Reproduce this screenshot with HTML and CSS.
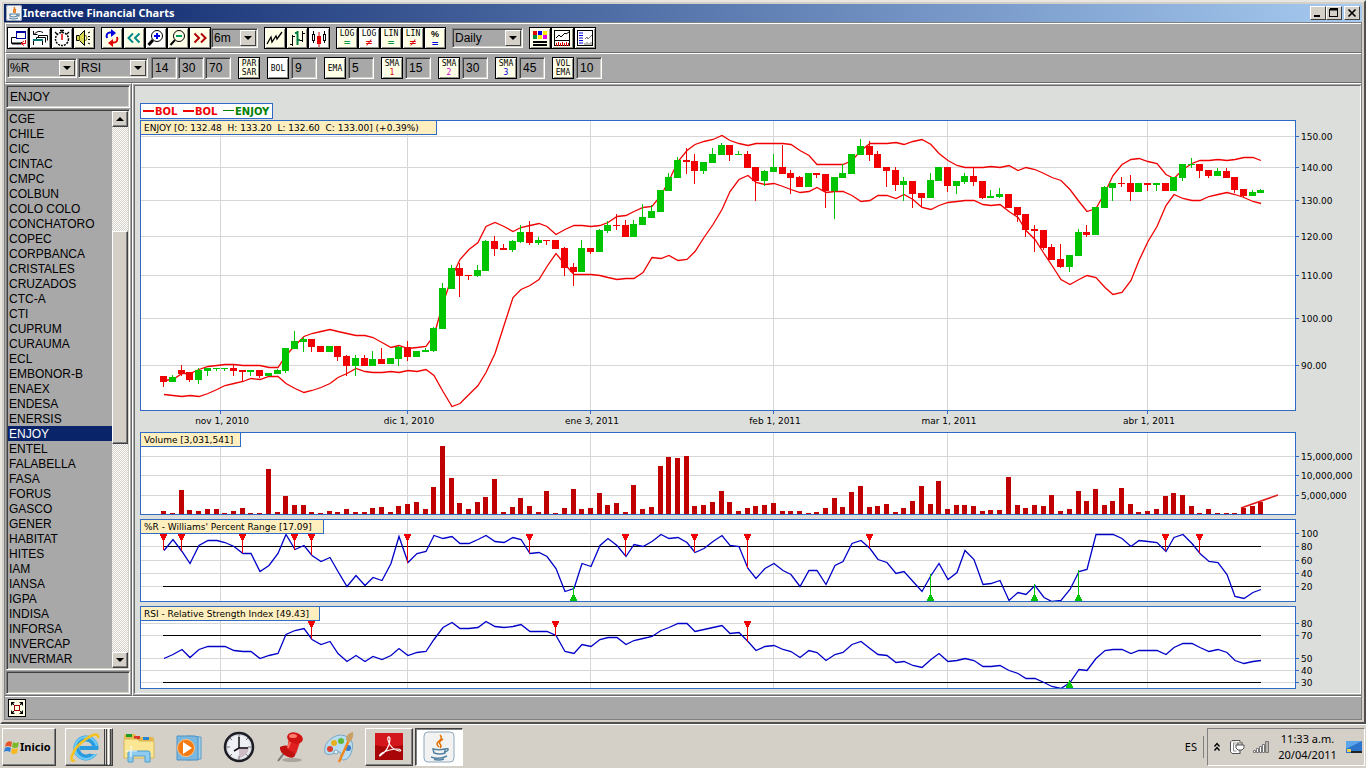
FILE: index.html
```html
<!DOCTYPE html>
<html lang="es">
<head>
<meta charset="utf-8">
<title>Interactive Financial Charts</title>
<link rel="stylesheet" href="styles.css">
</head>
<body>
<div class="window">
  <header class="titlebar">
    <svg class="title-icon" viewBox="0 0 16 16"><rect x="0" y="0" width="16" height="16" rx="2" fill="#f4f4f4"/><rect x=".5" y=".5" width="15" height="15" rx="2" fill="none" stroke="#9aa5b5"/><path d="M8 2C10 4 6 5 8 8M10 4C8 5.500 10 6 9 8" stroke="#e76f00" fill="none" stroke-width="1.300"/><path d="M4 9h7v2q-3.500 2-7 0zM11 9h2v2h-2M3 13q5 2 9 0" fill="none" stroke="#5382a1" stroke-width="1.200"/></svg>
    <h1>Interactive Financial Charts</h1>
    <div class="winctl">
      <button aria-label="Minimizar"><svg viewBox="0 0 12 10"><path d="M2 8h6" stroke="#000" stroke-width="2"/></svg></button>
      <button aria-label="Restaurar"><svg viewBox="0 0 12 10"><path d="M2 1h8M2 1.500h8" stroke="#000" stroke-width="2"/><rect x="1.500" y="1.500" width="8" height="7" fill="none" stroke="#000"/></svg></button>
      <button class="close" aria-label="Cerrar"><svg viewBox="0 0 12 10"><path d="M2.500 1.500l7 7M9.500 1.500l-7 7" stroke="#000" stroke-width="1.700"/></svg></button>
    </div>
  </header>

  <div class="app">
    <div class="toolbar">
      <div class="group">
        <button class="tool on" aria-label="Nueva ventana"><svg viewBox="0 0 20 20"><path d="M8 9.500H3.500v6H13.500V14" fill="none" stroke="#000"/><path d="M4 15.500h9" stroke="#000" stroke-width="2"/><path d="M8.500 4h9" stroke="#00a" stroke-width="2"/><rect x="8.500" y="3.500" width="9" height="7" fill="none" stroke="#0000a0"/><path d="M17.500 12v3.500H14M16 13l-3 2.500 3 2" fill="none" stroke="#e00000"/></svg></button>
        <button class="tool on" aria-label="Restaurar ventanas"><svg viewBox="0 0 20 20"><path d="M8.500 9.500V7.500h9v5M6.500 12.500V9.500h9v5M3.500 17v-5.500h9V17" fill="none" stroke="#000"/><path d="M3 12h10" stroke="#087878" stroke-width="2"/><path d="M3.500 3v3.500h4M4 6.500Q8 1.500 13 4.500" fill="none" stroke="#000"/></svg></button>
        <button class="tool on" aria-label="Temporizador"><svg viewBox="0 0 20 20"><circle cx="10" cy="11" r="6.500" fill="none" stroke="#000" stroke-width="1.500" stroke-dasharray="2 1"/><path d="M8 2.500h4M10 2v3M3 4l2 2M17 4l-2 2" stroke="#000" stroke-width="1.300"/><path d="M10 6v6" stroke="#e00000" stroke-width="1.500"/></svg></button>
        <button class="tool" aria-label="Sonido"><svg viewBox="0 0 20 20"><path d="M2.500 7.500h3l5-5v15l-5-5h-3z" fill="#d8d850" stroke="#000"/><path d="M5.500 7v6M11.500 7q3 3 0 6" fill="none" stroke="#707000"/><path d="M14 5l2-1M14 8.500h2M14 11.500h2M14 15l2 1" stroke="#000"/></svg></button>
      </div>
      <div class="group">
        <button class="tool" aria-label="Actualizar"><svg viewBox="0 0 20 20"><path d="M5 10Q3.500 5 8 4.500h2" fill="none" stroke="#00d" stroke-width="2"/><path d="M9 1l5 4-5 4z" fill="#00d"/><path d="M15 9q1.500 5-3 5.500h-2" fill="none" stroke="#e00000" stroke-width="2"/><path d="M11 11l-5 4 5 4z" fill="#e00000"/></svg></button>
        <button class="tool" aria-label="Retroceder"><svg viewBox="0 0 20 20"><path d="M9 5.500L4.500 10 9 14.500M15.500 5.500L11 10l4.500 4.500" fill="none" stroke="#008888" stroke-width="2"/></svg></button>
        <button class="tool on" aria-label="Acercar"><svg viewBox="0 0 20 20"><path d="M7 12l-4.500 5" stroke="#000" stroke-width="3"/><circle cx="11" cy="8" r="5.500" fill="#fff" stroke="#000"/><path d="M11 5v6M8 8h6" stroke="#00e" stroke-width="2"/></svg></button>
        <button class="tool" aria-label="Alejar"><svg viewBox="0 0 20 20"><path d="M7 12l-4.500 5" stroke="#000" stroke-width="2"/><circle cx="11" cy="8" r="5.500" fill="#ffffe8" stroke="#000"/><path d="M8 8h6" stroke="#00a060" stroke-width="2"/></svg></button>
        <button class="tool" aria-label="Avanzar"><svg viewBox="0 0 20 20"><path d="M4.500 5.500L9 10l-4.500 4.500M11 5.500l4.500 4.500-4.500 4.500" fill="none" stroke="#b00000" stroke-width="2"/></svg></button>
        <label class="combo period"><select aria-label="Periodo"><option>6m</option><option>1y</option></select><span class="arrow"></span></label>
      </div>
      <div class="group">
        <button class="tool" aria-label="Línea"><svg viewBox="0 0 20 20"><path d="M2 16l4-7 1 5 4-6 1 3 5-7" fill="none" stroke="#000" stroke-width="1.300"/></svg></button>
        <button class="tool" aria-label="Barras"><svg viewBox="0 0 20 20"><path d="M5.500 7v11M3 16.500h3M5 8.500h3M15.500 3v11M13 12.500h3M15 5.500h3" stroke="#000"/><path d="M10.500 3v14M8 5h3M10 12h3" stroke="#008040" stroke-width="2"/></svg></button>
        <button class="tool on" aria-label="Velas"><svg viewBox="0 0 20 20"><path d="M4.500 3v12M15.500 3v12" stroke="#000"/><rect x="3.500" y="6.500" width="2" height="6" fill="#fff" stroke="#000"/><rect x="14.500" y="6.500" width="2" height="6" fill="#fff" stroke="#000"/><path d="M10 4v15" stroke="#c00000"/><rect x="8" y="8" width="4" height="8" fill="#e00000"/></svg></button>
      </div>
      <div class="group scales">
        <button class="tool txt">LOG<i class="eq green">=</i></button>
        <button class="tool txt on">LOG<i class="eq red">≠</i></button>
        <button class="tool txt">LIN<i class="eq green">=</i></button>
        <button class="tool txt">LIN<i class="eq red">≠</i></button>
        <button class="tool txt pct"><b>%</b><i class="eq blue">=</i></button>
        <label class="combo freq"><select aria-label="Frecuencia"><option>Daily</option><option>Weekly</option></select><span class="arrow"></span></label>
      </div>
      <div class="group">
        <button class="tool" aria-label="Colores"><svg viewBox="0 0 20 20"><path d="M3 3h4v4H3z" fill="#e00000"/><path d="M8 3h4v4H8z" fill="#00e"/><path d="M13 3h4v4h-4zM8 7h4v4H8z" fill="#ffe800"/><path d="M3 7h4v4H3z" fill="#009040"/><path d="M13 7h4v4h-4z" fill="#e000e0"/><path d="M3 14h14M3 17h14" stroke="#000" stroke-width="2"/></svg></button>
        <button class="tool wide" aria-label="Volumen"><svg viewBox="0 0 20 20"><rect x="2.500" y="2.500" width="15" height="15" fill="#fff" stroke="#000"/><path d="M3 12.500h15" stroke="#000"/><path d="M4 10l3-3 2 2 4-4 1 1 3-2" fill="none" stroke="#000"/><path d="M4.500 15v3M6.500 14v4M8.500 15v3M10.500 14v4M12.500 15v3M14.500 14v4M16.500 15v3" stroke="#e00000"/></svg></button>
        <button class="tool on" aria-label="Panel lateral"><svg viewBox="0 0 20 20"><rect x="2.500" y="2.500" width="15" height="15" fill="#fff" stroke="#000"/><path d="M4 5h4M4 7.500h4M4 10h4M4 12.500h4M4 15h4" stroke="#00d"/><path d="M10 11l2-2 1 2 4-4M10 15v2M12 14v3M14 15v2M16 14v3" fill="none" stroke="#777"/></svg></button>
      </div>
    </div>

    <div class="toolbar second">
      <div class="group selects">
        <label class="combo ind"><select aria-label="Indicador 1"><option>%R</option></select><span class="arrow"></span></label>
        <label class="combo ind"><select aria-label="Indicador 2"><option>RSI</option></select><span class="arrow"></span></label>
      </div>
      <div class="group nums">
        <input class="num" aria-label="Periodo del indicador" value="14">
        <input class="num" aria-label="Nivel inferior" value="30">
        <input class="num" aria-label="Nivel superior" value="70">
      </div>
      <div class="group"><button class="tool txt two">PAR<span>SAR</span></button></div>
      <div class="group pair"><button class="tool txt one on">BOL</button><input class="num" aria-label="BOL" value="9"></div>
      <div class="group pair"><button class="tool txt one">EMA</button><input class="num" aria-label="EMA" value="5"></div>
      <div class="group pair"><button class="tool txt two">SMA<span class="red">1</span></button><input class="num" aria-label="SMA 1" value="15"></div>
      <div class="group pair"><button class="tool txt two">SMA<span class="magenta">2</span></button><input class="num" aria-label="SMA 2" value="30"></div>
      <div class="group pair"><button class="tool txt two">SMA<span class="blue">3</span></button><input class="num" aria-label="SMA 3" value="45"></div>
      <div class="group pair"><button class="tool txt two">VOL<span>EMA</span></button><input class="num" aria-label="VOL EMA" value="10"></div>
    </div>

    <main class="main">
      <aside class="side">
        <input class="field" aria-label="Símbolo" value="ENJOY">
        <div class="listwrap">
          <ul class="list" id="symbols" role="listbox" aria-label="Símbolos"></ul>
          <div class="scroll">
            <button class="sbtn" aria-label="Subir"><span class="tri up-tri"></span></button>
            <div class="track"><div class="thumb"></div></div>
            <button class="sbtn" aria-label="Bajar"><span class="tri down-tri"></span></button>
          </div>
        </div>
        <input class="field" aria-label="Mensaje" value="">
      </aside>
      <section class="chartframe">
        <svg id="chart" class="chart" viewBox="135 86 1225 607" role="img" aria-label="ENJOY"></svg>
      </section>
    </main>

    <footer class="status">
      <button class="fit" aria-label="Pantalla completa"><svg viewBox="0 0 16 16"><path d="M2 6V2h4zM10 2h4v4zM2 10v4h4zM14 10v4h-4z" fill="#000"/><path d="M3 3l3 3M13 3l-3 3M3 13l3-3M13 13l-3-3" stroke="#000"/><rect x="5.500" y="5.500" width="5" height="5" fill="#ffffe8" stroke="#a00000"/></svg></button>
    </footer>
  </div>
</div>

<nav class="taskbar">
  <button class="start"><svg viewBox="0 0 16 16"><path d="M2 4q3-3 6-1L7 8Q4 6 1 8z" fill="#e8542a"/><path d="M9 3q3 2 6 0l-1 5q-3 2-6 0z" fill="#7cb928"/><path d="M1 9q3-2 6 0l-1 4q-3-2-6 0z" fill="#2d7ed8"/><path d="M8 9q3 2 6 0l-1 5q-3 2-6 0z" fill="#f8b820"/></svg>Inicio</button>
  <button class="task ie" aria-label="Internet Explorer"><svg viewBox="0 0 32 32"><circle cx="16" cy="17" r="9.500" fill="none" stroke="#2b9be0" stroke-width="6"/><circle cx="16" cy="17" r="11" fill="none" stroke="#6fcbf5" stroke-width="2"/><path d="M10 17h18" stroke="#2b9be0" stroke-width="4"/><path d="M20 21h11v-2" stroke="#d4d0c8" stroke-width="4" fill="none"/><path d="M5 29C-2 33 2 19 12 11S29 1 28 7" fill="none" stroke="#f6c21c" stroke-width="2.500"/></svg><span class="stack"></span><span class="stack"></span></button>
  <button class="launch" aria-label="Explorador"><svg viewBox="0 0 32 32"><path d="M1 5q0-2 2-2h9l2 3h15q2 0 2 2v18H1z" fill="#e4b94b"/><path d="M3 3h6v3H3z" fill="#1a9c2c"/><path d="M11 5h6v3h-6z" fill="#d8352a"/><path d="M20 6h6v3h-6z" fill="#2a83cf"/><path d="M1 8h13l2 2h15v17H1z" fill="#fbe793" stroke="#d8b35a"/><path d="M5 31V22q0-2 2-2h18q2 0 2 2v9h-5v-6H10v6z" fill="#8ecbee" stroke="#4b9dcb"/><path d="M3 20h11M8 15v11" stroke="#fff"/></svg></button>
  <button class="launch" aria-label="Reproductor"><svg viewBox="0 0 32 32"><path d="M14 5l14 1v22l-14 1z" fill="#a6cfe8" stroke="#5a9cc8"/><path d="M4 5h18l3 1v23H4z" fill="#7ab8e0" stroke="#4d92c4"/><circle cx="13" cy="17" r="8.500" fill="#f47a10" stroke="#ffc080"/><path d="M10 11v12l9-6z" fill="#fff"/></svg></button>
  <button class="launch" aria-label="Reloj"><svg viewBox="0 0 32 32"><circle cx="16" cy="16" r="14" fill="#d8d8e0" stroke="#1c1c24" stroke-width="2.500"/><circle cx="16" cy="16" r="11.500" fill="#eef0f4"/><path d="M16 16h10A11 11 0 0 1 16 27z" fill="#cdbcc6"/><path d="M16 3v4M16 25v4M3 16h4M25 16h4M7 7l2 2M25 7l-2 2M7 25l2-2M25 25l-2-2" stroke="#777"/><path d="M16 6v11l-5 3M16 17h9" fill="none" stroke="#111" stroke-width="1.500"/></svg></button>
  <button class="launch pin" aria-label="Notas"><svg viewBox="0 0 32 32"><ellipse cx="19" cy="29" rx="10" ry="2" fill="#aaa59d"/><path d="M12 21l-7 9" stroke="#777" stroke-width="2"/><path d="M7 16q6-4 13 2 4 5 1 8-3 2-8-1-7-4-6-9z" fill="#c01010"/><path d="M16 7l-2 11 9 5 4-12z" fill="#e02020"/><ellipse cx="22" cy="7" rx="8" ry="5.500" transform="rotate(15 22 7)" fill="#d01414"/><ellipse cx="20" cy="5" rx="4" ry="2" fill="#ff7d70"/><path d="M17 11l-2 6" stroke="#ff7060" stroke-width="2"/></svg></button>
  <button class="launch" aria-label="Paint"><svg viewBox="0 0 32 32"><path d="M2 22Q0 13 9 7t17 0q5 4 3 12-2 9-8 10-4 0-3-5t-6-2-10 0z" fill="#b8dcf0" stroke="#78a8c8"/><circle cx="11" cy="12" r="3" fill="#e8b020"/><circle cx="18" cy="10" r="3" fill="#60b838"/><circle cx="7" cy="18" r="3" fill="#d84030"/><circle cx="13" cy="21" r="2" fill="#eef8ff" stroke="#7aa0b8"/><circle cx="25" cy="17" r="3" fill="#3878c8"/><path d="M16 31L26 9" stroke="#f08820" stroke-width="2.500"/><path d="M23 9q0-7 7-8 1 6-3 10z" fill="#c8a064"/></svg></button>
  <button class="task acro" aria-label="Adobe Reader"><svg viewBox="0 0 32 32"><rect x="2" y="2" width="28" height="27" fill="#a80508"/><path d="M2 2h28v12Q16 18 2 14z" fill="#d3161b"/><path d="M8 24c4-2 9-9 9-16 0-3-3-3-2 1 1 6 6 10 11 11 3 0 2-2-2-2-6 0-11 2-15 4-3 2-3 4-1 2z" fill="none" stroke="#fff" stroke-width="1.200"/></svg></button>
  <button class="task java active" aria-label="Java"><svg viewBox="0 0 32 32"><rect x="1" y="1" width="30" height="30" rx="4" fill="#f2f2f2" stroke="#8fa9bd"/><path d="M17 4q3 3-1 6t0 6M20 8q-5 3-3 5t0 4" fill="none" stroke="#e76f00" stroke-width="1.500"/><path d="M10 18q6 1.500 12 0v4q-5 2-11 0zM22 18q4-1 3 1t-4 2M8 26q8 3 16-1M11 28.500q6 1 10-.5" fill="none" stroke="#5382a1" stroke-width="1.500"/></svg></button>
  <span class="lang">ES</span>
  <div class="tray">
    <button class="mini" aria-label="Mostrar iconos ocultos"><svg viewBox="0 0 8 10"><path d="M1.500 4.500l2.500-3 2.500 3M1.500 8.500l2.500-3 2.500 3" fill="none" stroke="#000" stroke-width="1.400"/></svg></button>
    <svg class="trayicon" viewBox="0 0 16 16"><path d="M3 1.500h8v3M11 14.500H3l-1.500-2V3L3 1.500" fill="#fff" stroke="#555"/><path d="M4.500 4v8h3" fill="none" stroke="#888"/><path d="M7 6h8v3l-2 2h-4L7 9zM9 6V3M13 6V3M11 11v4" fill="#fff" stroke="#555"/></svg>
    <svg class="trayicon" viewBox="0 0 16 16"><path d="M.5 11.500h2v2h-2zM3.500 9.500h2v4h-2zM6.500 7.500h2v6h-2zM9.500 5.500h2v8h-2z" fill="#fff" stroke="#777"/><path d="M12.500 2.500h3v11h-3z" fill="#b9b5ad" stroke="#777"/></svg>
    <div class="clock"><span>11:33 a.m.</span><span>20/04/2011</span></div>
    <svg class="trayicon desk" viewBox="0 0 16 14"><rect x="0" y="1" width="16" height="12" fill="#2d74cc"/><path d="M0 1h16L0 9z" fill="#5aa4ea"/><path d="M5 11h11v2H5z" fill="#222"/><path d="M1 9h4v3H1z" fill="#e8d050"/></svg>
  </div>
</nav>
<script src="chart.js"></script>
</body>
</html>
```

FILE: styles.css
```css
* { box-sizing: border-box; }
html, body { height: 100%; }
body {
  margin: 0;
  display: flex;
  flex-direction: column;
  min-height: 100vh;
  overflow: hidden;
  background: #d4d0c8;
  color: #000;
  font: 12px/15px "Liberation Sans", Arial, sans-serif;
}
button, input, select { font: inherit; color: inherit; margin: 0; padding: 0; border-radius: 0; }
svg { display: block; }

.window {
  flex: 1;
  min-height: 0;
  display: flex;
  flex-direction: column;
  padding: 2px;
  border: 2px solid;
  border-color: #e8e6e0 #505050 #505050 #e8e6e0;
  background: #d4d0c8;
}
.titlebar {
  height: 18px;
  flex: none;
  display: flex;
  align-items: center;
  gap: 1px;
  padding: 0 2px;
  background: linear-gradient(90deg, #0a246a, #a6caf0);
}
.title-icon { width: 16px; height: 16px; }
.titlebar h1 { flex: 1; margin: 0; color: #fff; font: bold 11px/18px "Noto Sans", sans-serif; }
.winctl { display: flex; }
.winctl button {
  width: 16px;
  height: 14px;
  padding: 1px;
  background: #d4d0c8;
  border: 1px solid;
  border-color: #fff #404040 #404040 #fff;
}
.winctl svg { width: 12px; height: 10px; }
.winctl .close { margin-left: 2px; }

.app {
  flex: 1;
  min-height: 0;
  display: flex;
  flex-direction: column;
  border: 1px solid #808080;
  background: #a8a8a8;
}
.toolbar {
  height: 30px;
  flex: none;
  display: flex;
  align-items: center;
  gap: 6px;
  padding: 0 1px;
  border-top: 1px solid #fff;
  border-left: 1px solid #fff;
  border-bottom: 1px solid #6c6c6c;
}
.toolbar.second { gap: 7px; }
.group { display: flex; align-items: center; }
.group.pair { gap: 2px; }
.group.nums { gap: 1px; }
.group.selects { gap: 1px; margin-right: -4px; }
.tool {
  width: 22px;
  height: 22px;
  flex: none;
  padding: 0;
  background: #ffffe8;
  border: 1px solid #000;
  box-shadow: inset 1px 1px #fff, inset -1px -1px #909088;
}
.tool.on { background: #fff; }
.tool.wide { width: 23px; }
.tool svg { width: 20px; height: 20px; }
.tool.txt {
  display: flex;
  flex-direction: column;
  align-items: center;
  justify-content: center;
  font: 8px/9px "DejaVu Sans Mono", monospace;
}
.tool.txt .eq { font: 11px/9px "DejaVu Sans Mono", monospace; }
.tool.pct { font-size: 10px; }
.tool.pct b { font: bold 9px/10px "Liberation Sans", sans-serif; }
.red { color: #e00000; }
.green { color: #009848; }
.blue { color: #0000e0; }
.magenta { color: #c800c8; }
.scales .combo { margin-left: 6px; }

.combo, .num, .field, .listwrap {
  border: 1px solid;
  border-color: #808080 #fff #fff #808080;
  box-shadow: inset 1px 1px #404040, inset -1px -1px #d4d0c8;
}
.combo { position: relative; display: block; height: 20px; background: #a8a8a8; }
.combo.period { width: 47px; }
.combo.freq { width: 71px; }
.combo.ind { width: 70px; }
.combo select {
  appearance: none;
  width: 100%;
  height: 18px;
  padding: 0 18px 0 2px;
  border: 0;
  background: transparent;
  outline: 0;
}
.combo .arrow {
  position: absolute;
  top: 1px;
  right: 1px;
  width: 16px;
  height: 16px;
  pointer-events: none;
  background: #d4d0c8;
  border: 1px solid;
  border-color: #fff #404040 #404040 #fff;
}
.combo .arrow::after {
  content: "";
  position: absolute;
  left: 3px;
  top: 5px;
  border: 4px solid transparent;
  border-top-color: #000;
  border-bottom: 0;
}
.num { width: 26px; height: 22px; padding: 0 3px; background: #a8a8a8; }

.main { flex: 1; min-height: 0; display: grid; grid-template-columns: 127px 1fr; grid-template-rows: minmax(0, 1fr); }
.side {
  display: flex;
  flex-direction: column;
  gap: 1px;
  min-height: 0;
  padding: 1px;
  border-top: 1px solid #fff;
  border-right: 1px solid #6c6c6c;
  border-bottom: 1px solid #6c6c6c;
}
.field { width: 100%; height: 23px; flex: none; padding: 0 3px; background: #a8a8a8; }
.listwrap { flex: 1; min-height: 0; display: flex; padding: 1px; }
.list { flex: 1; margin: 0; padding: 0; list-style: none; overflow: hidden; }
.list li { height: 15px; padding-left: 1px; line-height: 17px; white-space: nowrap; cursor: default; }
.list li[aria-selected="true"] { background: #0a246a; color: #fff; }
.scroll { width: 16px; flex: none; display: flex; flex-direction: column; }
.sbtn, .thumb {
  background: #d4d0c8;
  border: 1px solid;
  border-color: #fff #404040 #404040 #fff;
  box-shadow: inset -1px -1px #808080;
}
.sbtn { width: 16px; height: 16px; display: flex; align-items: center; justify-content: center; }
.tri { border: 4px solid transparent; }
.up-tri { border-top: 0; border-bottom-color: #000; }
.down-tri { border-bottom: 0; border-top-color: #000; }
.track {
  flex: 1;
  padding-top: 104px;
  background: repeating-conic-gradient(#fff 0 25%, #d4d0c8 0 50%) 0 0 / 2px 2px;
}
.thumb { height: 213px; }

.chartframe {
  min-width: 0;
  min-height: 0;
  padding: 1px 0 1px 1px;
  border: 1px solid #fff;
  border-right: 0;
  border-bottom-color: #6c6c6c;
}
.chart {
  width: 100%;
  height: 100%;
  background: #dcdedb;
  border: 1px solid;
  border-color: #6c6c6c #fff #fff #6c6c6c;
  font: 9px "DejaVu Sans", sans-serif;
}
.chart text { white-space: pre; }
.shape { shape-rendering: crispEdges; }
.plot { fill: #fff; stroke: none; }
.frame { fill: none; stroke: #2f6bc4; }
.grid { stroke: #d6d6d6; }
.tick { stroke: #2f6bc4; }
.level { stroke: #000; }
.band { fill: none; stroke: #f00000; stroke-width: 1.3; }
.osc { fill: none; stroke: #0000c8; stroke-width: 1.3; }
.up { fill: #00c400; }
.dn { fill: #f00000; }
.vol { fill: #c00000; }
.tag { fill: #ffefbf; stroke: #2f6bc4; }
.key { fill: #fff; stroke: #2f6bc4; }
.keytext { font-weight: bold; font-size: 10px; }
.mid { text-anchor: middle; }

.status {
  height: 23px;
  flex: none;
  display: flex;
  align-items: center;
  padding: 0 3px;
  border-top: 1px solid #fff;
}
.fit { width: 18px; height: 18px; background: #ffffe8; border: 1px solid #000; }
.fit svg { width: 16px; height: 16px; }

.taskbar {
  height: 44px;
  flex: none;
  display: flex;
  align-items: center;
  padding: 0 1px 0 2px;
  border-top: 1px solid #fff;
  background: #d4d0c8;
}
.start, .task {
  height: 38px;
  flex: none;
  display: flex;
  align-items: center;
  background: #d4d0c8;
  border: 1px solid;
  border-color: #fff #404040 #404040 #fff;
  box-shadow: inset -1px -1px #808080;
}
.start { width: 54px; gap: 0; padding: 0 1px; margin-right: 9px; font: bold 11px/16px "Noto Sans", sans-serif; }
.start svg { width: 16px; height: 16px; }
.task { width: 48px; justify-content: center; }
.task svg, .launch svg { width: 32px; height: 32px; }
.task.ie { justify-content: flex-start; padding-left: 4px; gap: 1px; }
.stack { width: 3px; height: 36px; border-left: 1px solid #fff; border-right: 1px solid #404040; }
.stack:first-of-type { margin-left: 1px; border-left-color: #404040; }
.launch { width: 50px; height: 38px; flex: none; padding: 0 9px; border: 0; background: transparent; }
.ie { margin-right: 1px; }
.acro { margin-left: 1px; }
.java { margin-left: 2px; }
.task.active { background: #fff; border-color: #404040 #fff #fff #404040; box-shadow: inset 1px 1px #808080; }
.lang {
  margin-left: auto;
  padding: 3px 6px;
  border-right: 1px solid #808080;
  font: 11px/16px "Noto Sans", sans-serif;
}
.tray {
  height: 38px;
  margin-left: 3px;
  width: 158px;
  display: flex;
  align-items: center;
  border: 1px solid;
  border-color: #808080 #fff #fff #808080;
  padding: 0 2px 0 5px;
  gap: 8px;
}
.mini { width: 8px; height: 10px; border: 0; background: transparent; }
.trayicon { width: 16px; height: 16px; flex: none; }
.mini svg { width: 8px; height: 10px; }
.clock { flex: 1; display: flex; flex-direction: column; text-align: center; font: 11px/16px "Noto Sans", sans-serif; }
.desk { height: 14px; }
```

FILE: chart.js
```js
const NS = "http://www.w3.org/2000/svg";
const chart = document.getElementById("chart");

const symbols = ("CGE,CHILE,CIC,CINTAC,CMPC,COLBUN,COLO COLO,CONCHATORO,COPEC,CORPBANCA,CRISTALES,CRUZADOS,CTC-A,CTI," +
  "CUPRUM,CURAUMA,ECL,EMBONOR-B,ENAEX,ENDESA,ENERSIS,ENJOY,ENTEL,FALABELLA,FASA,FORUS,GASCO,GENER,HABITAT,HITES," +
  "IAM,IANSA,IGPA,INDISA,INFORSA,INVERCAP,INVERMAR").split(",");
const list = document.getElementById("symbols");
for (const s of symbols) {
  const li = document.createElement("li");
  li.textContent = s;
  li.setAttribute("role", "option");
  li.setAttribute("aria-selected", String(s === "ENJOY"));
  list.append(li);
}

function add(name, attrs, text) {
  const el = document.createElementNS(NS, name);
  for (const k in attrs) el.setAttribute(k, attrs[k]);
  if (text !== undefined) el.textContent = text;
  chart.append(el);
  return el;
}
const box = (cls, x, y, w, h) => add("rect", { class: cls + " shape", x, y, width: w, height: h });
const line = (cls, x1, y1, x2, y2) => add("line", { class: cls + " shape", x1, y1, x2, y2 });
const nums = s => s.trim().split(/\s+/).map(Number);

/* Session i is drawn in pixel column col(i). Data values are in thirds of a unit. */
const STEP = 1097 / 126;
const col = i => Math.round(163.35 + STEP * i);

const L = 140, R = 1295, FIRST = 163, LAST = 1261;
const months = [[220, "nov 1, 2010"], [407, "dic 1, 2010"], [590, "ene 3, 2011"], [773, "feb 1, 2011"], [947, "mar 1, 2011"], [1147, "abr 1, 2011"]];
const panels = [
  { top: 120, bottom: 410, rows: [[136, "150.00"], [167, "140.00"], [200, "130.00"], [236, "120.00"], [275, "110.00"], [318, "100.00"], [365, "90.00"]], levels: [] },
  { top: 432, bottom: 514, rows: [[456, "15,000,000"], [475, "10,000,000"], [495, "5,000,000"]], levels: [] },
  { top: 519, bottom: 601, rows: [[533, "100"], [546, "80"], [560, "60"], [573, "40"], [586, "20"]], levels: [546, 586] },
  { top: 606, bottom: 688, rows: [[623, "80"], [635, "70"], [658, "50"], [670, "40"], [682, "30"]], levels: [635, 682] }
];

/* direction, body top, body bottom, high, low */
const quotes = `
R 798 815 798 830,G 801 815 795 815,R 780 791 765 797,R 787 809 787 815,G 780 809 775 821,G 774 782 774 797,
G 774 777 774 783,G 774 777 774 783,R 774 783 766 797,R 780 786 780 815,G 780 786 780 797,R 780 797 780 804,
G 789 798 789 798,G 780 791 777 791,G 714 782 714 788,G 693 716 663 716,G 687 695 680 725,R 687 710 687 725,
R 708 725 708 725,G 708 725 708 725,R 708 740 708 752,R 738 767 735 797,G 744 767 735 797,R 744 767 735 767,
G 747 767 723 767,R 747 761 714 761,G 744 761 744 761,G 711 746 708 767,R 711 740 693 752,G 723 740 723 740,
G 720 725 714 725,G 654 722 651 725,G 534 656 519 656,G 474 536 465 536,R 474 497 459 560,R 495 498 495 509,
G 480 497 465 500,G 393 482 390 482,R 393 416 378 437,R 414 419 402 419,G 393 419 390 425,G 366 395 345 398,
R 366 398 333 404,G 390 398 381 404,R 390 393 390 404,R 390 416 390 416,R 414 473 411 497,R 471 485 459 527,
G 414 485 390 485,R 414 425 414 431,G 360 425 357 425,G 345 362 333 368,R 345 348 312 359,R 345 380 330 380,
G 342 380 330 380,G 321 344 282 344,G 303 323 285 323,G 240 305 240 305,G 201 242 189 242,G 150 203 141 203,
R 150 155 114 191,R 153 182 132 221,G 156 182 156 191,G 132 158 114 158,G 105 134 99 134,R 105 134 105 152,
G 132 135 123 135,R 132 173 123 173,R 171 212 171 272,G 183 212 180 227,G 171 185 132 185,R 171 191 105 191,
R 189 203 180 251,R 201 230 198 230,G 189 230 189 230,R 189 194 189 203,R 192 242 192 293,G 201 242 201 326,
G 189 203 162 203,G 132 191 132 191,G 108 134 87 134,R 108 134 93 152,R 132 173 123 173,R 171 182 171 230,
R 180 224 171 242,G 213 224 201 272,R 213 251 213 293,R 249 263 249 290,G 210 263 189 263,G 171 212 171 212,
R 171 227 171 245,G 213 227 213 251,G 198 215 189 221,R 198 215 174 227,R 213 263 213 266,G 258 263 240 263,
G 252 260 234 263,R 252 293 252 293,R 291 314 291 335,R 312 359 312 380,R 357 362 345 425,R 360 413 360 419,
R 411 449 402 449,R 447 470 402 473,G 435 470 435 485,G 366 437 357 437,R 366 374 345 380,G 291 374 291 374,
G 231 293 228 293,G 219 233 219 272,R 219 222 201 230,R 219 245 195 272,G 219 245 219 245,R 219 224 219 242,
G 219 224 219 242,R 219 242 219 242,G 201 242 201 242,G 162 203 162 212,G 162 165 144 173,R 162 182 162 203,
R 180 197 180 203,G 183 197 174 197,R 183 203 174 203,R 201 239 201 248,R 237 257 237 260,G 246 257 240 257,
G 240 248 237 248`.trim().split(",").map(q => q.trim().split(" "));

const upper = nums(`810 808 791 789 777 770 767 763 763 766 766 766 771 771 735 705 680 669 665 658 664 670 676 676 683
697 711 706 716 713 708 675 580 500 448 418 398 350 337 348 363 352 345 341 348 373 357 347 347 349 347 337 318 316 303 291
289 255 210 155 121 102 95 87 77 90 99 106 101 101 101 101 103 121 137 162 163 163 163 152 120 101 101 101 97 103 95 89 103
130 151 166 172 172 172 169 172 167 181 172 178 189 203 212 238 274 303 295 248 195 162 149 145 153 160 194 205 178 160 152
151 148 151 149 142 142 151`);
const lower = nums(`852 856 859 856 859 851 839 827 821 813 806 808 799 799 820 835 847 841 833 820 801 789 775 784 787
787 784 788 781 784 778 795 845 890 879 852 825 788 730 645 563 537 527 507 468 431 463 493 493 493 496 502 508 505 505 487
442 445 436 450 447 424 382 343 297 243 209 195 216 223 220 229 238 247 244 233 246 244 244 256 273 271 257 256 265 254 268
293 298 286 277 275 271 271 282 286 283 303 322 362 388 430 467 509 523 509 496 502 533 553 546 512 450 395 350 285 252 265
271 271 258 254 247 253 262 274 280`);
const volume = nums(`258 264 195 255 258 252 252 264 258 249 264 264 132 261 213 240 240 261 264 258 261 252 261 261 249
246 261 243 237 231 252 186 63 159 234 252 231 216 162 261 246 219 243 261 198 264 249 192 252 249 204 240 234 261 180 252
246 123 96 99 93 243 240 231 198 231 258 249 243 240 234 258 258 258 264 261 249 219 246 201 183 246 243 237 261 249 228 183
237 168 252 240 240 243 258 255 255 156 240 249 240 243 210 258 252 198 228 192 240 228 189 237 261 258 252 213 204 210 243
264 252 264 264 264 249 243 231`);
const percentR = nums(`375 343 378 415 361 347 347 351 365 384 386 438 420 385 328 374 362 390 408 396 440 484 451 482
457 465 415 335 413 386 379 331 340 335 355 355 344 332 348 352 337 343 384 382 395 430 498 490 415 423 360 341 362 394 358
364 348 328 340 337 353 382 369 349 332 360 365 430 460 431 416 435 449 484 436 436 478 420 408 356 347 370 402 411 445 440
470 499 451 415 463 441 377 404 478 476 467 527 502 508 482 518 529 526 493 440 433 328 328 328 341 363 346 349 353 379 338
329 356 384 408 413 447 513 520 503 493`);
const rsi = nums(`700 689 674 697 674 664 664 664 675 679 680 700 692 684 628 615 610 642 657 650 685 710 692 708 695 703
691 671 691 683 679 643 606 593 610 610 607 590 603 608 604 598 619 619 620 632 678 685 658 664 642 637 637 657 646 640 634
616 607 596 596 619 613 607 602 625 623 650 676 665 661 673 680 696 677 682 706 687 682 659 650 669 687 692 712 710 722 727
704 686 709 706 700 707 724 724 721 737 745 760 761 773 784 790 772 733 736 701 677 673 673 685 676 676 676 688 667 655 656
668 680 673 683 706 715 710 706`);

for (const p of panels) {
  box("plot", L, p.top, R - L, p.bottom - p.top);
  for (const [x] of months) line("grid", x + .5, p.top, x + .5, p.bottom);
  for (const [y] of p.rows) line("grid", L, y + .5, R, y + .5);
  for (const y of p.levels) line("level", FIRST, y + .5, LAST, y + .5);
}

function curve(cls, base, data) {
  const points = data.map((v, i) => (col(i) + 1) + "," + (base + Math.floor(v / 3) + .5)).join(" ");
  add("polyline", { class: cls, points });
}
curve("band", 110, upper);
curve("band", 110, lower);

quotes.forEach(([dir, top, bottom, high, low], i) => {
  const y = v => 110 + Math.round(v / 3);
  const cls = dir === "G" ? "up" : "dn";
  box(cls, col(i), y(high), 1, Math.max(1, y(low) - y(high)));
  box(cls, col(i) - 3, y(top), 7, Math.max(1, y(bottom) - y(top)));
});

volume.forEach((v, i) => box("vol", col(i) - 2, 425 + v / 3, 5, 89 - v / 3));
curve("osc", 425, percentR);
curve("osc", 425, rsi);

function arrowDown(i, top, tip) {
  const x = col(i);
  box("dn", x, top, 1, tip - top);
  add("path", { class: "dn shape", d: `M${x - 3} ${top}h7v2h-1v2h-1v2h-3v-2h-1v-2h-1z` });
}
function arrowUp(i, bottom, tip) {
  const x = col(i);
  box("up", x, tip, 1, bottom - tip);
  add("path", { class: "up shape", d: `M${x - 3} ${bottom}h7v-2h-1v-2h-1v-2h-3v2h-1v2h-1z` });
}
for (const i of [0, 2, 9, 15, 17, 28, 42, 53, 61, 67, 81, 115, 119]) arrowDown(i, 534, 425 + Math.round(percentR[i] / 3));
for (const [i, tip] of [[47, 586], [88, 574], [100, 584], [105, 570]]) arrowUp(i, 601, tip);
for (const i of [17, 45, 67]) arrowDown(i, 621, 425 + Math.round(rsi[i] / 3));
arrowUp(104, 688, 680);

add("line", { x1: 1241, y1: 508, x2: 1278, y2: 495, stroke: "#e01818", "stroke-width": 1.5 });

for (const p of panels) {
  box("frame", L + .5, p.top + .5, R - L, p.bottom - p.top);
  for (const [y, text] of p.rows) {
    line("tick", R, y + .5, R + 4, y + .5);
    add("text", { x: 1301, y: y + 4 }, text);
  }
}
for (const [x, text] of months) {
  line("tick", x + .5, 410, x + .5, 414);
  add("text", { class: "mid", x: x + 2, y: 424 }, text);
}

function tag(top, width, text) {
  box("tag", L + .5, top + .5, width, 14);
  add("text", { x: 144, y: top + 11 }, text);
}
tag(120, 296, "ENJOY [O: 132.48  H: 133.20  L: 132.60  C: 133.00] (+0.39%)");
tag(432, 100, "Volume [3,031,541]");
tag(519, 183, "%R - Williams' Percent Range [17.09]");
tag(606, 179, "RSI - Relative Strength Index [49.43]");

box("key", 140.5, 103.5, 132, 15);
for (const [x, color, weight, text] of [[143, "#f00000", 2, "BOL"], [183, "#f00000", 2, "BOL"], [223, "#008000", 1, "ENJOY"]]) {
  add("rect", { class: "shape", x, y: 110, width: 11, height: weight, fill: color });
  add("text", { class: "keytext", x: x + 12, y: 115, fill: color }, text);
}
```
